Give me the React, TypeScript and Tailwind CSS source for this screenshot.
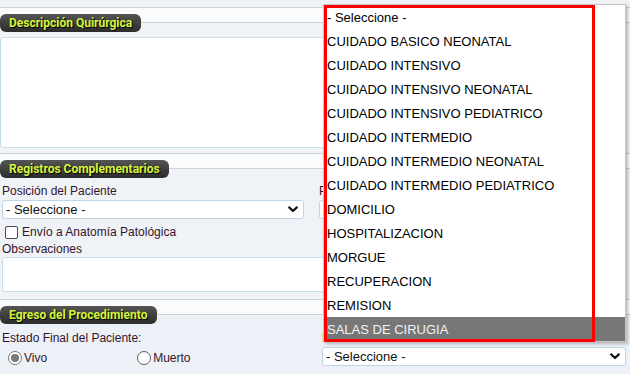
import React from 'react';

const options = [
  '- Seleccione -',
  'CUIDADO BASICO NEONATAL',
  'CUIDADO INTENSIVO',
  'CUIDADO INTENSIVO NEONATAL',
  'CUIDADO INTENSIVO PEDIATRICO',
  'CUIDADO INTERMEDIO',
  'CUIDADO INTERMEDIO NEONATAL',
  'CUIDADO INTERMEDIO PEDIATRICO',
  'DOMICILIO',
  'HOSPITALIZACION',
  'MORGUE',
  'RECUPERACION',
  'REMISION',
  'SALAS DE CIRUGIA',
];

const Chevron = () => (
  <svg width="10" height="7" viewBox="0 0 10 7" className="shrink-0">
    <path d="M1.2 1.4 L5 5 L8.8 1.4" fill="none" stroke="#111" strokeWidth="2.2" strokeLinecap="round" strokeLinejoin="round" />
  </svg>
);

const FakeSelect: React.FC<{ className?: string }> = ({ className = '' }) => (
  <div className={`h-[19px] flex items-center justify-between bg-white border border-[#bcd5e7] rounded-[3px] pl-[3px] pr-[5px] text-[13px] text-[#111] ${className}`}>
    <span>- Seleccione -</span>
    <Chevron />
  </div>
);

const SectionHeader: React.FC<{ title: string; width: string }> = ({ title, width }) => (
  <>
    <div className="h-[15px] bg-[#fafbfc] border-b border-[#cfd2d6]" />
    <div
      className={`relative -mt-[9px] h-[18px] ${width} rounded-[6px] bg-gradient-to-b from-[#555555] to-[#2c2c2c] pl-[9px] flex items-center font-['Roboto',Arial,sans-serif] font-bold text-[12px] text-[#d4f53c] [text-shadow:1px_1px_1px_#000]`}
    >
      {title}
    </div>
  </>
);

export default function App() {
  return (
    <div className="relative w-[630px] h-[374px] overflow-hidden bg-[#f0f3f6] font-['Liberation_Sans',Arial,sans-serif] text-[12px] leading-[14px] text-[#36142a]">
      <div className="h-[7px]" />

      {/* Descripción Quirúrgica */}
      <section className="border-t border-[#cfd2d6] bg-[#f1f4f7]">
        <SectionHeader title="Descripción Quirúrgica" width="w-[141px]" />
        <div className="mt-[5px] h-[111px] mr-[4px] bg-white border border-[#c8dcea] rounded-[3px]" />
        <div className="h-[5px]" />
      </section>

      {/* Registros Complementarios */}
      <section className="border-t border-[#cfd2d6] bg-[#eff3f7]">
        <SectionHeader title="Registros Complementarios" width="w-[169px]" />
        <div className="flex pl-[2px] mt-[6px]">
          <div className="w-[302px]">
            <div className="h-[14px]">Posición del Paciente</div>
            <FakeSelect className="mt-[2px]" />
          </div>
          <div className="ml-[15px] flex-1 mr-[4px]">
            <div className="h-[14px]">Profilaxis</div>
            <FakeSelect className="mt-[2px]" />
          </div>
        </div>
        <div className="mt-[6px] h-[14px] flex items-center pl-[5px] gap-[4px]">
          <div className="w-[13px] h-[13px] border border-[#4b4b4b] rounded-[2px] bg-white" />
          <span>Envío a Anatomía Patológica</span>
        </div>
        <div className="mt-[3px] h-[14px] pl-[2px]">Observaciones</div>
        <div className="mt-[1px] ml-[2px] mr-[4px] h-[35px] bg-white border border-[#c8dcea] rounded-[3px]" />
        <div className="h-[7px]" />
      </section>

      {/* Egreso del Procedimiento */}
      <section className="border-t border-[#cfd2d6] bg-[#ebf1f7] h-[80px]">
        <SectionHeader title="Egreso del Procedimiento" width="w-[157px]" />
        <div className="flex pl-[2px] mt-[7px]">
          <div className="w-[305px]">
            <div className="h-[14px]">Estado Final del Paciente:</div>
            <div className="mt-[6px] h-[14px] flex items-center">
              <div className="ml-[6px] w-[14px] h-[14px] rounded-full border border-[#7a7a7a] bg-white flex items-center justify-center">
                <div className="w-[8px] h-[8px] rounded-full bg-[#7a7a7a]" />
              </div>
              <span className="ml-[2px]">Vivo</span>
              <div className="ml-[90px] w-[14px] h-[14px] rounded-full border border-[#5f5f5f] bg-white" />
              <span className="ml-[2px]">Muerto</span>
            </div>
          </div>
          <div className="ml-[15px] flex-1 mr-[4px]">
            <div className="h-[14px]">Destino</div>
            <FakeSelect className="mt-[2px]" />
          </div>
        </div>
      </section>

      {/* Open dropdown list */}
      <div className="absolute left-[323px] top-[4px] w-[303px] bg-white border border-[#c6c6c6] shadow-[2px_2px_3px_rgba(0,0,0,0.25)] text-[13px] leading-[23px] text-[#000]">
        {options.map((o, i) => (
          <div
            key={o}
            className={`h-[24px] pt-[1px] pl-[3px] whitespace-nowrap ${i === options.length - 1 ? 'bg-[#777777] text-[#f2f2f2]' : ''}`}
          >
            {o}
          </div>
        ))}
        <div className="absolute left-0 top-0 w-[271px] h-[337px] border-[3px] border-[#ff0000] pointer-events-none" />
      </div>
    </div>
  );
}
